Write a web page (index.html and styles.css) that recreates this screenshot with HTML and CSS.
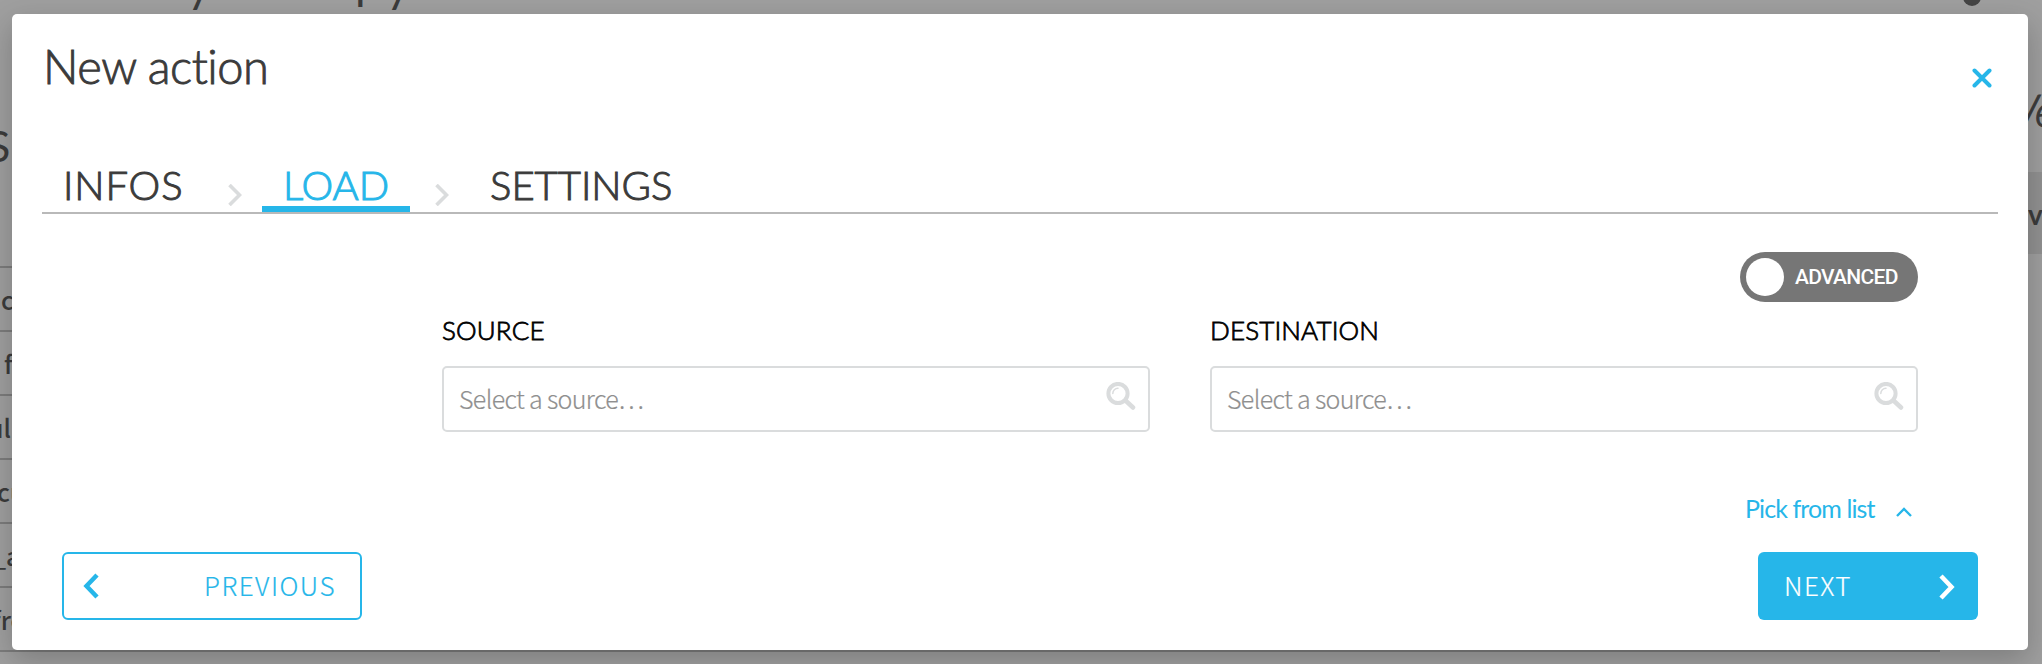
FILE: index.html
```html
<!DOCTYPE html>
<html lang="en">
<head>
<meta charset="utf-8">
<title>New action</title>
<link rel="stylesheet" href="styles.css">
</head>
<body>
<div class="backdrop" aria-hidden="true">
  <span class="frag frag-top-a">y</span>
  <span class="frag frag-top-b">p</span>
  <span class="frag frag-top-c">y</span>
  <span class="frag-dot"></span>
  <span class="frag frag-s">S</span>
  <span class="frag frag-ve">Ve</span>
  <div class="band"><span class="band-text">v</span></div>
  <div class="rows">
    <div class="row"><span>c</span></div>
    <div class="row"><span class="row-f">f</span></div>
    <div class="row"><span class="row-ul">ul</span></div>
    <div class="row"><span class="row-cu">cu</span></div>
    <div class="row"><span class="row-a">_a</span></div>
    <div class="row"><span class="row-fro">fro</span></div>
  </div>
</div>
<main class="modal">
  <header class="head">
    <h1 class="title">New action</h1>
    <svg class="close" viewBox="0 0 20 20"><path d="M2.5 2.5L17.5 17.5M17.5 2.5L2.5 17.5"/></svg>
  </header>
  <nav class="tabs">
    <span class="tab infos">INFOS</span>
    <svg class="sep" viewBox="0 0 14 22"><path d="M1.5 1L11.5 11L1.5 21"/></svg>
    <span class="tab active"><span class="load">LOAD</span></span>
    <svg class="sep" viewBox="0 0 14 22"><path d="M1.5 1L11.5 11L1.5 21"/></svg>
    <span class="tab settings">SETTINGS</span>
  </nav>
  <div class="toggle-line">
    <div class="toggle"><span class="knob"></span><span class="toggle-label">ADVANCED</span></div>
  </div>
  <section class="fields">
    <div class="field">
      <div class="label">SOURCE</div>
      <div class="input"><span class="placeholder">Select a source…</span>
        <svg class="search" viewBox="0 0 30 28"><circle cx="12" cy="11.5" r="9.6"/><path class="shine" d="M6.8 11.5A5.2 5.2 0 0 1 12 6.3"/><path class="handle" d="M20 19L27 25.5"/></svg>
      </div>
    </div>
    <div class="field">
      <div class="label">DESTINATION</div>
      <div class="input"><span class="placeholder">Select a source…</span>
        <svg class="search" viewBox="0 0 30 28"><circle cx="12" cy="11.5" r="9.6"/><path class="shine" d="M6.8 11.5A5.2 5.2 0 0 1 12 6.3"/><path class="handle" d="M20 19L27 25.5"/></svg>
      </div>
    </div>
  </section>
  <div class="pick"><span class="pick-text">Pick from list</span><svg class="pick-icon" viewBox="0 0 16 10"><path d="M1 9L8 2L15 9"/></svg></div>
  <footer class="actions">
    <div class="btn previous"><svg class="chev" viewBox="0 0 16 26"><path d="M14 2L3.5 13L14 24"/></svg><span class="prev-text">PREVIOUS</span></div>
    <div class="btn next"><span class="next-text">NEXT</span><svg class="chev" viewBox="0 0 16 26"><path d="M2 2L12.5 13L2 24"/></svg></div>
  </footer>
</main>
</body>
</html>
```

FILE: styles.css
```css
* { box-sizing: border-box; }
body {
  margin: 0;
  width: 2042px;
  height: 664px;
  overflow: hidden;
  position: relative;
  background: #9f9f9f;
  font-family: Lato, sans-serif;
  color: #3b3b3b;
}
svg { display: block; flex: none; fill: none; }

/* dimmed page behind the dialog */
.backdrop { position: absolute; inset: 0; overflow: hidden; }
.frag { position: absolute; line-height: 1; font-size: 46px; white-space: nowrap; }
.frag-top-a { left: 187px; top: -38px; }
.frag-top-b { left: 355px; top: -41px; }
.frag-top-c { left: 386px; top: -38px; }
.frag-dot { position: absolute; left: 1963px; top: -12px; width: 18px; height: 18px; border-radius: 50%; background: #444; }
.frag-s { left: -13px; top: 124px; font-size: 43px; }
.frag-ve { left: 2011px; top: 87px; font-size: 46px; font-style: italic; font-weight: 300; -webkit-text-stroke: 1px #3b3b3b; letter-spacing: -1px; }
.band {
  position: absolute;
  left: 2028px;
  right: 0;
  top: 172px;
  height: 82px;
  padding-top: 26px;
  background: #919191;
  font: 700 28px/32px Lato, sans-serif;
}
.rows {
  position: absolute;
  left: 0;
  top: 266px;
  width: 1940px;
  border-top: 2px solid #7c7c7c;
  font: 500 25px/62px "Noto Sans CJK SC", sans-serif;
}
.row { height: 64px; padding-left: 1px; border-bottom: 2px solid #7c7c7c; }
.row-f { margin-left: 3px; }
.row-ul { margin-left: -13px; }
.row-cu { margin-left: -4px; }
.row-a { margin-left: -9px; }
.row-fro { margin-left: -9px; }

.modal {
  position: relative;
  width: 2016px;
  height: 636px;
  margin: 14px 0 0 12px;
  border-radius: 5px;
  background: #fff;
  box-shadow: 0 10px 30px rgba(0, 0, 0, .22);
}
.head {
  display: flex;
  justify-content: space-between;
  height: 128px;
  padding: 24px 36px 0 31px;
}
.title { margin: 0; font-size: 47px; font-weight: 300; line-height: 56px; letter-spacing: -.5px; -webkit-text-stroke: .9px #3b3b3b; }
.close { width: 20px; height: 20px; margin-top: 30px; stroke: #26b6e9; stroke-width: 4; stroke-linecap: round; }

.tabs {
  display: flex;
  height: 72px;
  margin: 0 30px;
  padding-top: 14px;
  border-bottom: 2px solid #b9b9b9;
  font-size: 40px;
  font-weight: 300;
  line-height: 58px;
  -webkit-text-stroke: 1px currentColor;
}
.infos { width: 186px; padding-left: 21px; letter-spacing: .9px; }
.sep { width: 14px; height: 22px; margin-top: 28px; stroke: #dadcdd; stroke-width: 3.6; }
.active { width: 148px; height: 56px; margin: 0 25px 0 20px; padding-left: 21px; border-bottom: 6px solid #26b6e9; color: #26b6e9; }
.settings { padding-left: 41px; }

.toggle-line { display: flex; justify-content: flex-end; padding: 38px 110px 0 0; }
.toggle { display: flex; align-items: center; width: 178px; height: 50px; padding-left: 6px; border-radius: 25px; background: #767676; }
.knob { width: 38px; height: 38px; border-radius: 50%; background: #fff; }
.toggle-label { margin-left: 11px; color: #fff; font: 500 21px/30px Roboto, sans-serif; letter-spacing: -.7px; }

.fields { display: flex; gap: 60px; padding: 12px 0 0 430px; }
.field { width: 708px; }
.label { height: 52px; color: #000; font-size: 26px; font-weight: 300; line-height: 33px; letter-spacing: .15px; -webkit-text-stroke: .8px #000; }
.input {
  display: flex;
  justify-content: space-between;
  height: 66px;
  padding: 0 12px 0 15px;
  border: 2px solid #dadcdd;
  border-radius: 5px;
}
.placeholder { color: #8f8f8f; font: 300 25px/60px "Noto Sans CJK SC", sans-serif; letter-spacing: -.65px; -webkit-text-stroke: .2px #8f8f8f; }
.search { width: 30px; height: 28px; margin-top: 14px; stroke: #dadcdd; stroke-width: 4; stroke-linecap: round; }
.search .shine { stroke-width: 1.5; }
.search .handle { stroke-width: 4.5; }

.pick { display: flex; height: 68px; margin-top: 52px; padding-left: 1733px; color: #26b6e9; font-size: 25px; line-height: 49px; letter-spacing: -.9px; }
.pick-text { width: 151px; white-space: nowrap; }
.pick-icon { width: 16px; height: 10px; margin-top: 23px; stroke: #26b6e9; stroke-width: 2.4; }

.actions { display: flex; justify-content: space-between; padding: 0 50px; }
.btn { display: flex; justify-content: space-between; height: 68px; border-radius: 6px; font: 300 26px/62px "Noto Sans CJK SC", sans-serif; letter-spacing: 1.5px; -webkit-text-stroke: .2px currentColor; }
.chev { width: 16px; height: 26px; stroke: currentColor; stroke-width: 4.5; }
.previous { width: 300px; padding: 0 24px 0 19px; border: 2px solid #26b6e9; color: #26b6e9; }
.previous .chev { margin-top: 19px; }
.next { width: 220px; padding: 2px 23px 0 26px; background: #26b6e9; color: #fff; }
.next .chev { margin-top: 20px; }
```
